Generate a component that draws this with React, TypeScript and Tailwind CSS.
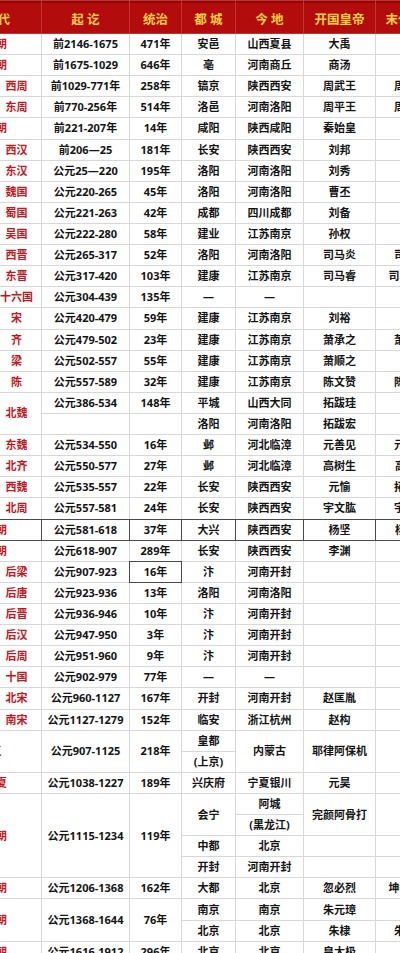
import React from "react";

type C = { t?: string; rs?: number; d?: boolean; l?: boolean };
type N = { t: string; main?: boolean; rs?: number };
type R = { n?: N; c: C[]; dark?: boolean };

const c = (...xs: (string | C)[]): C[] => xs.map((x) => (typeof x === "string" ? { t: x } : x));

const rows: R[] = [
  { n: { t: "夏朝", main: true }, c: c("前2146-1675", "471年", "安邑", "山西夏县", "大禹", "") },
  { n: { t: "商朝", main: true }, c: c("前1675-1029", "646年", "亳", "河南商丘", "商汤", "") },
  { n: { t: "西周" }, c: c("前1029-771年", "258年", "镐京", "陕西西安", "周武王", "周幽王") },
  { n: { t: "东周" }, c: c("前770-256年", "514年", "洛邑", "河南洛阳", "周平王", "周赧王") },
  { n: { t: "秦朝", main: true }, c: c("前221-207年", "14年", "咸阳", "陕西咸阳", "秦始皇", "") },
  { n: { t: "西汉" }, c: c("前206—25", "181年", "长安", "陕西西安", "刘邦", "") },
  { n: { t: "东汉" }, c: c("公元25—220", "195年", "洛阳", "河南洛阳", "刘秀", "") },
  { n: { t: "魏国" }, c: c("公元220-265", "45年", "洛阳", "河南洛阳", "曹丕", "") },
  { n: { t: "蜀国" }, c: c("公元221-263", "42年", "成都", "四川成都", "刘备", "") },
  { n: { t: "吴国" }, c: c("公元222-280", "58年", "建业", "江苏南京", "孙权", "") },
  { n: { t: "西晋" }, c: c("公元265-317", "52年", "洛阳", "河南洛阳", "司马炎", "司马邺") },
  { n: { t: "东晋" }, c: c("公元317-420", "103年", "建康", "江苏南京", "司马睿", "司马德文") },
  { n: { t: "十六国" }, c: c("公元304-439", "135年", "—", "—", "", "") },
  { n: { t: "宋" }, c: c("公元420-479", "59年", "建康", "江苏南京", "刘裕", "") },
  { n: { t: "齐" }, c: c("公元479-502", "23年", "建康", "江苏南京", "萧承之", "萧宝融") },
  { n: { t: "梁" }, c: c("公元502-557", "55年", "建康", "江苏南京", "萧顺之", "") },
  { n: { t: "陈" }, c: c("公元557-589", "32年", "建康", "江苏南京", "陈文赞", "陈叔宝") },
  { n: { t: "北魏", rs: 2 }, c: c("公元386-534", "148年", "平城", "山西大同", "拓跋珪", "") },
  { c: c("", "", "洛阳", "河南洛阳", "拓跋宏", "") },
  { n: { t: "东魏" }, c: c("公元534-550", "16年", "邺", "河北临漳", "元善见", "元善见") },
  { n: { t: "北齐" }, c: c("公元550-577", "27年", "邺", "河北临漳", "高树生", { t: "高恒", l: true }) },
  { n: { t: "西魏" }, c: c("公元535-557", "22年", "长安", "陕西西安", "元愉", "拓跋廓") },
  { n: { t: "北周" }, c: c("公元557-581", "24年", "长安", "陕西西安", "宇文肱", "宇文阐") },
  { n: { t: "隋朝", main: true }, dark: true, c: c("公元581-618", "37年", "大兴", "陕西西安", "杨坚", { t: "杨侑", l: true }) },
  { n: { t: "唐朝", main: true }, c: c("公元618-907", "289年", "长安", "陕西西安", "李渊", "") },
  { n: { t: "后梁" }, c: c("公元907-923", { t: "16年", d: true }, "汴", "河南开封", "", "") },
  { n: { t: "后唐" }, c: c("公元923-936", "13年", "洛阳", "河南洛阳", "", "") },
  { n: { t: "后晋" }, c: c("公元936-946", "10年", "汴", "河南开封", "", "") },
  { n: { t: "后汉" }, c: c("公元947-950", "3年", "汴", "河南开封", "", "") },
  { n: { t: "后周" }, c: c("公元951-960", "9年", "汴", "河南开封", "", "") },
  { n: { t: "十国" }, c: c("公元902-979", "77年", "—", "—", "", "") },
  { n: { t: "北宋" }, c: c("公元960-1127", "167年", "开封", "河南开封", "赵匡胤", "") },
  { n: { t: "南宋" }, c: c("公元1127-1279", "152年", "临安", "浙江杭州", "赵构", "") },
  {
    n: { t: "辽", main: true, rs: 2 },
    c: [{ t: "公元907-1125", rs: 2 }, { t: "218年", rs: 2 }, { t: "皇都" }, { t: "内蒙古", rs: 2 }, { t: "耶律阿保机", rs: 2 }, { t: "", rs: 2 }],
  },
  { c: c("(上京)") },
  { n: { t: "西夏", main: true }, c: c("公元1038-1227", "189年", "兴庆府", "宁夏银川", "元昊", "") },
  {
    n: { t: "金朝", main: true, rs: 4 },
    c: [{ t: "公元1115-1234", rs: 4 }, { t: "119年", rs: 4 }, { t: "会宁", rs: 2 }, { t: "阿城" }, { t: "完颜阿骨打", rs: 2 }, { t: "", rs: 2 }],
  },
  { c: c("(黑龙江)") },
  { c: c("中都", "北京", "", "") },
  { c: c("开封", "河南开封", "", "") },
  { n: { t: "元朝", main: true }, c: c("公元1206-1368", "162年", "大都", "北京", "忽必烈", "坤帖睦尔") },
  {
    n: { t: "明朝", main: true, rs: 2 },
    c: [{ t: "公元1368-1644", rs: 2 }, { t: "76年", rs: 2 }, { t: "南京" }, { t: "南京" }, { t: "朱元璋" }, { t: "" }],
  },
  { c: c("北京", "北京", "朱棣", "朱由检") },
  { n: { t: "清朝", main: true }, c: c("公元1616-1912", "296年", "北京", "北京", "皇太极", "") },
];

const headers = ["朝 代", "起 讫", "统治", "都 城", "今 地", "开国皇帝", "末代皇帝"];

export default function App() {
  return (
    <div className="w-[400px] h-[953px] overflow-hidden bg-white font-['Noto_Sans','Noto_Sans_CJK_SC',sans-serif]">
      <table className="table-fixed border-collapse w-[495px] ml-[-50px]">
        <colgroup>
          <col className="w-[91px]" />
          <col className="w-[88px]" />
          <col className="w-[52px]" />
          <col className="w-[54px]" />
          <col className="w-[68px]" />
          <col className="w-[72px]" />
          <col className="w-[70px]" />
        </colgroup>
        <thead>
          <tr className="h-[33px] bg-[#b30c0c]">
            {headers.map((h) => (
              <th
                key={h}
                className="border border-[#c23434] p-0 pt-[5px] text-center align-middle whitespace-pre text-[12.5px] leading-[16px] font-bold text-[#ffd33a] shadow-[inset_0_2px_0_#8f0808]"
              >
                {h}
              </th>
            ))}
          </tr>
        </thead>
        <tbody>
          {rows.map((r, i) => (
            <tr key={i} className="h-[21.12px]">
              {r.n && (
                <td
                  rowSpan={r.n.rs}
                  className={
                    "p-0 text-center align-middle whitespace-nowrap text-[11px] leading-[14px] font-bold text-[#c4161c] " +
                    (r.dark ? "border border-double border-[#4a4a4a] " : "border border-[#d8d8d8] ") +
                    (r.n.main ? "" : "pl-[41px]")
                  }
                >
                  {r.n.t}
                </td>
              )}
              {r.c.map((cell, j) => {
                const last = j === r.c.length - 1 && (r.n ? true : false) ? true : false;
                return (
                  <td
                    key={j}
                    rowSpan={cell.rs}
                    className={
                      "p-0 align-middle whitespace-nowrap overflow-hidden text-[11px] leading-[14px] font-bold text-[#141414] " +
                      (r.dark || cell.d ? "border border-double border-[#4a4a4a] " : "border border-[#d8d8d8] ") +
                      (cell.l ? "text-left pl-[19px]" : "text-center")
                    }
                    data-last={last ? "1" : "0"}
                  >
                    {cell.t}
                  </td>
                );
              })}
            </tr>
          ))}
        </tbody>
      </table>
    </div>
  );
}
